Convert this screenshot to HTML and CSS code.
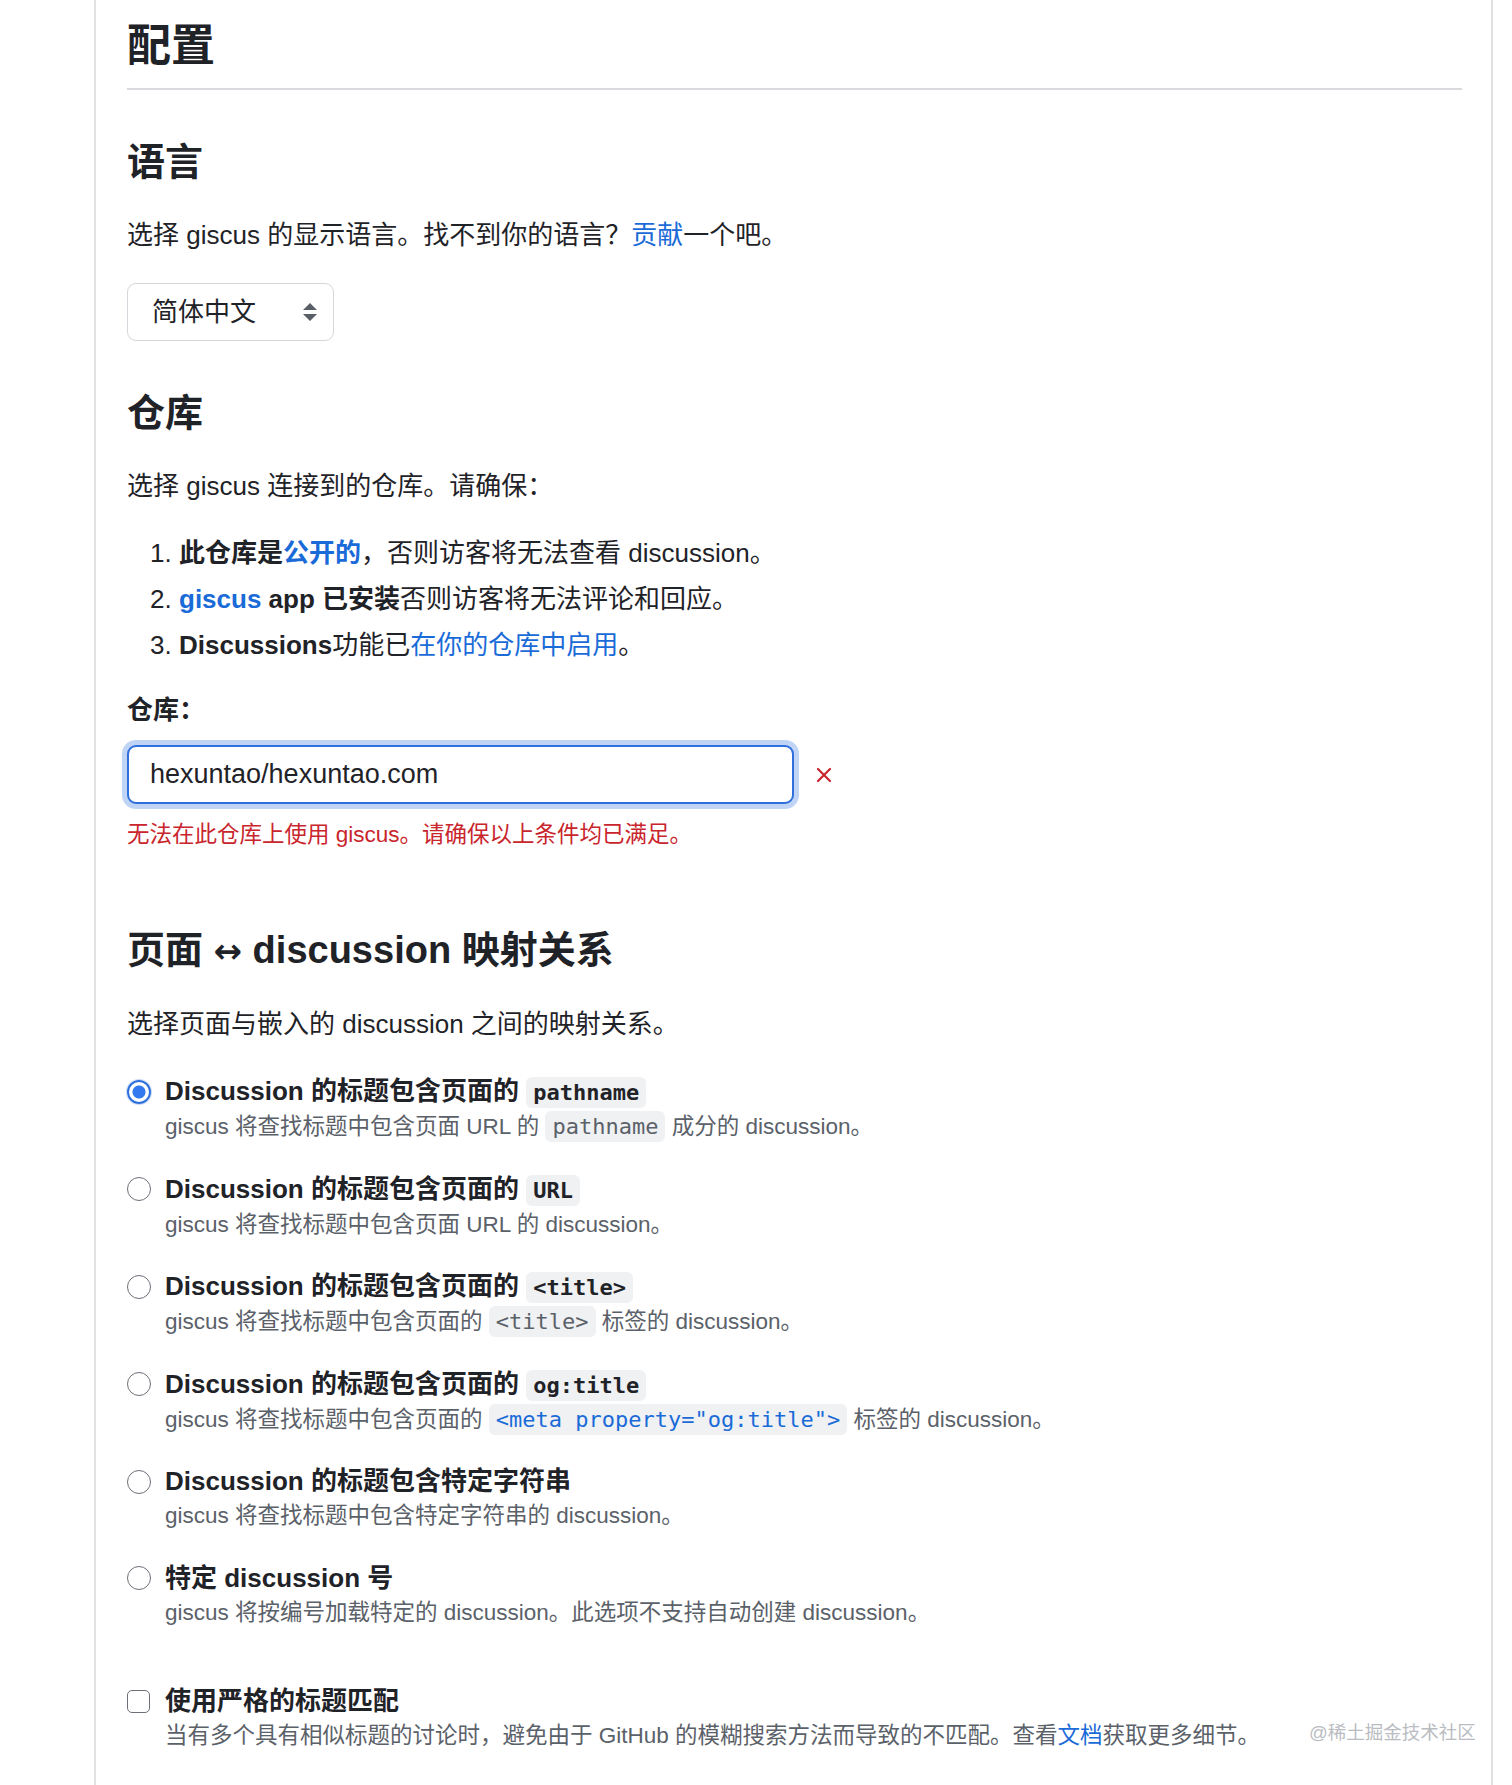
FILE: index.html
```html
<!DOCTYPE html>
<html lang="zh-CN">
<head>
  <meta charset="UTF-8">
  <meta name="viewport" content="width=device-width, initial-scale=1.0">
  <title>giscus 配置</title>
  <link rel="stylesheet" href="styles.css">
</head>
<body>
<main class="page">
  <h1>配置</h1>

  <h2>语言</h2>
  <p>选择 giscus 的显示语言。找不到你的语言？<a href="#">贡献</a>一个吧。</p>
  <div class="select">
    <span>简体中文</span>
    <svg width="14" height="18" viewBox="0 0 14 18"><path d="M7 0 L14 7 H0 Z M0 11 H14 L7 18 Z" fill="#5a5f66"/></svg>
  </div>

  <h2>仓库</h2>
  <p>选择 giscus 连接到的仓库。请确保：</p>
  <ol class="checklist">
    <li><strong>此仓库是<a href="#">公开的</a></strong>，否则访客将无法查看 discussion。</li>
    <li><strong><a href="#">giscus</a> app 已安装</strong>否则访客将无法评论和回应。</li>
    <li><strong>Discussions</strong>功能已<a href="#">在你的仓库中启用</a>。</li>
  </ol>

  <div class="field-label">仓库：</div>
  <div class="repo-row">
    <input class="repo-input" type="text" value="hexuntao/hexuntao.com">
    <svg class="repo-x" width="16" height="16" viewBox="0 0 16 16"><path d="M2 2 L14 14 M14 2 L2 14" stroke="#c9252d" stroke-width="2.2" stroke-linecap="round"/></svg>
  </div>
  <div class="error">无法在此仓库上使用 giscus。请确保以上条件均已满足。</div>

  <h2>页面 <span class="arrow">↔</span> discussion 映射关系</h2>
  <p>选择页面与嵌入的 discussion 之间的映射关系。</p>

  <div class="options">
    <label class="option">
      <span class="radio checked"></span>
      <span class="option-body">
        <span class="option-title">Discussion 的标题包含页面的 <code>pathname</code></span>
        <span class="option-desc">giscus 将查找标题中包含页面 URL 的 <code>pathname</code> 成分的 discussion。</span>
      </span>
    </label>
    <label class="option">
      <span class="radio"></span>
      <span class="option-body">
        <span class="option-title">Discussion 的标题包含页面的 <code>URL</code></span>
        <span class="option-desc">giscus 将查找标题中包含页面 URL 的 discussion。</span>
      </span>
    </label>
    <label class="option">
      <span class="radio"></span>
      <span class="option-body">
        <span class="option-title">Discussion 的标题包含页面的 <code>&lt;title&gt;</code></span>
        <span class="option-desc">giscus 将查找标题中包含页面的 <code>&lt;title&gt;</code> 标签的 discussion。</span>
      </span>
    </label>
    <label class="option">
      <span class="radio"></span>
      <span class="option-body">
        <span class="option-title">Discussion 的标题包含页面的 <code>og:title</code></span>
        <span class="option-desc">giscus 将查找标题中包含页面的 <a href="#"><code>&lt;meta property="og:title"&gt;</code></a> 标签的 discussion。</span>
      </span>
    </label>
    <label class="option">
      <span class="radio"></span>
      <span class="option-body">
        <span class="option-title">Discussion 的标题包含特定字符串</span>
        <span class="option-desc">giscus 将查找标题中包含特定字符串的 discussion。</span>
      </span>
    </label>
    <label class="option">
      <span class="radio"></span>
      <span class="option-body">
        <span class="option-title">特定 discussion 号</span>
        <span class="option-desc">giscus 将按编号加载特定的 discussion。此选项不支持自动创建 discussion。</span>
      </span>
    </label>
  </div>

  <label class="option strict">
    <span class="checkbox"></span>
    <span class="option-body">
      <span class="option-title">使用严格的标题匹配</span>
      <span class="option-desc">当有多个具有相似标题的讨论时，避免由于 GitHub 的模糊搜索方法而导致的不匹配。查看<a href="#">文档</a>获取更多细节。</span>
    </span>
  </label>
</main>

<div class="watermark">@稀土掘金技术社区</div>
</body>
</html>
```

FILE: styles.css
```css
* {
    margin: 0;
    padding: 0;
    box-sizing: border-box;
}

body {
    background-color: #fff;
    color: #1f2328;
    font-family: 'Liberation Sans', 'Noto Sans CJK SC', sans-serif;
    font-size: 26px;
    line-height: 39px;
    position: relative;
    min-height: 1785px;
}

a {
    color: #1a6bd8;
    text-decoration: none;
}

.page {
    width: 1399px;
    min-height: 1785px;
    margin-left: 94px;
    padding: 18px 29px 0 31px;
    border-left: 2px solid #e1e1e1;
    border-right: 2px solid #e1e1e1;
}

h1 {
    font-size: 44px;
    line-height: 56px;
    font-weight: 700;
    padding-bottom: 14px;
    border-bottom: 2px solid #d8dadd;
}

h2 {
    font-size: 38px;
    line-height: 48px;
    font-weight: 700;
    margin: 48px 0 30px;
}

h2 .arrow {
    font-family: 'DejaVu Sans', sans-serif;
    font-size: 34px;
}

p {
    margin-bottom: 28px;
}

/* language select */
.select {
    width: 207px;
    height: 58px;
    display: flex;
    align-items: center;
    justify-content: space-between;
    padding: 0 16px 0 24px;
    border: 1.5px solid #d4d7db;
    border-radius: 9px;
}

/* repository checklist */
.checklist {
    padding-left: 52px;
    margin-bottom: 26px;
}

.checklist li + li {
    margin-top: 7px;
}

.field-label {
    font-weight: 700;
    margin-bottom: 15px;
}

.repo-row {
    display: flex;
    align-items: center;
    gap: 22px;
}

.repo-input {
    width: 667px;
    height: 59px;
    padding: 0 21px;
    border: 2px solid #2e6fdd;
    border-radius: 9px;
    box-shadow: 0 0 0 5px rgba(46, 111, 221, 0.3);
    font-family: 'Liberation Sans', 'Noto Sans CJK SC', sans-serif;
    font-size: 27px;
    color: #1f2328;
    outline: none;
}

.error {
    color: #c9252d;
    font-size: 22.5px;
    line-height: 34px;
    margin-top: 14px;
    margin-bottom: 74px;
}

/* mapping options */
.option {
    display: grid;
    grid-template-columns: 24px 1fr;
    column-gap: 14px;
    margin-bottom: 28.6px;
}

.option-body {
    display: flex;
    flex-direction: column;
}

.option-title {
    font-weight: 700;
}

.option-desc {
    color: #5b6169;
    font-size: 22.5px;
    line-height: 29px;
}

code {
    font-family: 'DejaVu Sans Mono', monospace;
    font-size: 22px;
    background-color: #eff1f3;
    border-radius: 6px;
    padding: 3px 7px;
}

.radio {
    width: 24px;
    height: 24px;
    margin-top: 7.5px;
    border: 1.5px solid #6b7078;
    border-radius: 50%;
    background: #fff;
}

.radio.checked {
    border: 2px solid #2e6fdd;
    background: radial-gradient(circle, #3478f0 0 6px, #fff 7px);
    box-shadow: 0 0 0 1px rgba(46, 111, 221, 0.25);
}

.checkbox {
    width: 23px;
    height: 23px;
    margin-top: 8px;
    border: 1.5px solid #6b7078;
    border-radius: 5px;
}

.strict {
    margin-top: 55px;
}

.watermark {
    position: absolute;
    left: 1309px;
    top: 1721px;
    font-size: 18.5px;
    line-height: 24px;
    color: #b9bcc1;
}
```
